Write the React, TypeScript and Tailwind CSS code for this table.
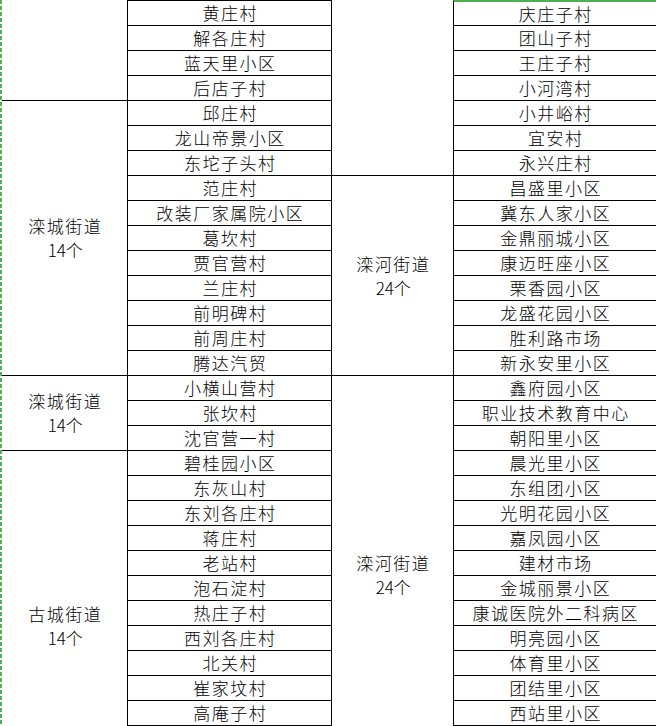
import React from 'react';

const leftNames = [
  '黄庄村', '解各庄村', '蓝天里小区', '后店子村', '邱庄村', '龙山帝景小区', '东坨子头村',
  '范庄村', '改装厂家属院小区', '葛坎村', '贾官营村', '兰庄村', '前明碑村', '前周庄村',
  '腾达汽贸', '小横山营村', '张坎村', '沈官营一村', '碧桂园小区', '东灰山村', '东刘各庄村',
  '蒋庄村', '老站村', '泡石淀村', '热庄子村', '西刘各庄村', '北关村', '崔家坟村', '高庵子村',
];

const rightNames = [
  '庆庄子村', '团山子村', '王庄子村', '小河湾村', '小井峪村', '宜安村', '永兴庄村',
  '昌盛里小区', '冀东人家小区', '金鼎丽城小区', '康迈旺座小区', '栗香园小区', '龙盛花园小区',
  '胜利路市场', '新永安里小区', '鑫府园小区', '职业技术教育中心', '朝阳里小区', '晨光里小区',
  '东组团小区', '光明花园小区', '嘉凤园小区', '建材市场', '金城丽景小区', '康诚医院外二科病区',
  '明亮园小区', '体育里小区', '团结里小区', '西站里小区',
];

// row index (1-based) -> grid row classes, written out so tailwind sees them
const rowStart = [
  'row-start-1', 'row-start-2', 'row-start-3', 'row-start-4', 'row-start-5', 'row-start-6',
  'row-start-7', 'row-start-8', 'row-start-9', 'row-start-10', 'row-start-11', 'row-start-12',
  'row-start-13', 'row-start-14', 'row-start-15', 'row-start-16', 'row-start-17', 'row-start-18',
  'row-start-19', 'row-start-20', 'row-start-21', 'row-start-22', 'row-start-23', 'row-start-24',
  'row-start-25', 'row-start-26', 'row-start-27', 'row-start-28', 'row-start-29',
];

const Group = ({ name, count }: { name: string; count: string }) => (
  <div className="flex flex-col items-center leading-[24px] pl-[1.5px]">
    <span>{name}</span>
    <span className="tracking-[0px]">{count}</span>
  </div>
);

export default function App() {
  return (
    <div
      className="flex w-[656px] h-[726px] overflow-hidden bg-white text-black text-[17px] font-light tracking-[1.5px]"
      style={{ fontFamily: '"Noto Sans CJK SC", "Noto Sans", sans-serif' }}
    >
      {/* page-break marker */}
      <div className="w-[2px] shrink-0 bg-[repeating-linear-gradient(to_bottom,#5cab5c_0_4px,transparent_4px_6px)]" />

      <div className="grid grid-cols-[125px_205px_121px_203px] grid-rows-[repeat(28,25px)_26px]">
        {/* left district column */}
        <div className="col-start-1 row-start-1 row-span-4" />
        <div className="col-start-1 row-start-5 row-span-11 border-t border-black flex items-center justify-center">
          <Group name="滦城街道" count="14个" />
        </div>
        <div className="col-start-1 row-start-16 row-span-3 border-t border-black flex items-center justify-center">
          <Group name="滦城街道" count="14个" />
        </div>
        <div className="col-start-1 row-start-19 row-span-11 border-t border-black flex justify-center pt-[151px]">
          <Group name="古城街道" count="14个" />
        </div>

        {/* left names */}
        {leftNames.map((n, i) => (
          <div
            key={n}
            className={`col-start-2 ${rowStart[i]} border-t border-x border-black flex items-center justify-center pl-[1.5px] ${i === leftNames.length - 1 ? 'border-b' : ''}`}
          >
            {n}
          </div>
        ))}

        {/* right district column */}
        <div className="col-start-3 row-start-1 row-span-7" />
        <div className="col-start-3 row-start-8 row-span-8 border-t border-black flex items-center justify-center">
          <Group name="滦河街道" count="24个" />
        </div>
        <div className="col-start-3 row-start-16 row-span-14 border-t border-black flex justify-center pt-[175px]">
          <Group name="滦河街道" count="24个" />
        </div>

        {/* right names */}
        {rightNames.map((n, i) => (
          <div
            key={n}
            className={`col-start-4 ${rowStart[i]} border-l border-black flex items-center justify-center pl-[1.5px] ${
              i === 0 ? 'border-t-2 border-t-[#4caf50]' : 'border-t'
            } ${i === rightNames.length - 1 ? 'border-b' : ''}`}
          >
            {n}
          </div>
        ))}
      </div>
    </div>
  );
}
